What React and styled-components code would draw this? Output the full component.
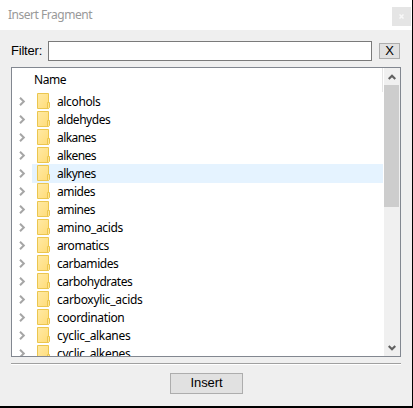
import React from "react";
import styled, { createGlobalStyle } from "styled-components";

const GlobalStyle = createGlobalStyle`
  * { box-sizing: border-box; }
  body { margin: 0; background: #000; overflow: hidden; }
  button, input { font: inherit; margin: 0; border-radius: 0; outline: none; }
`;

const Dialog = styled.main`
  display: flex;
  flex-direction: column;
  width: 412px;
  height: 406px;
  background: #efefef;
  color: #000;
  font: 12px/18px "Noto Sans", sans-serif;
`;

const TitleBar = styled.header`
  display: flex;
  justify-content: space-between;
  height: 30px;
  padding: 7px 1px 0 8px;
  background: #fff;
`;

const Title = styled.h1`
  margin: -1px 0 0;
  font-size: 12px;
  font-weight: 400;
  line-height: 18px;
  letter-spacing: -0.48px;
  color: #999;
`;

const CloseButton = styled.button`
  display: grid;
  place-items: center;
  width: 19px;
  height: 19px;
  padding: 0;
  border: 0;
  background: #e5e5e5;
`;

const FilterRow = styled.div`
  display: flex;
  align-items: center;
  height: 20px;
  margin: 11px 12px 6px 11px;
`;

const FilterLabel = styled.label`
  width: 37px;
  font-family: "Liberation Sans", sans-serif;
  font-size: 13px;
  letter-spacing: -0.2px;
  white-space: nowrap;
`;

const FilterInput = styled.input`
  width: 324px;
  height: 20px;
  padding: 0 4px;
  border: 1px solid #7a7a7a;
  background: #fff;
`;

const PushButton = styled.button`
  display: flex;
  align-items: center;
  justify-content: center;
  width: ${(p) => p.$width}px;
  height: ${(p) => p.$height}px;
  padding: 0 0 1px;
  border: 1px solid #adadad;
  background: #e1e1e1;
  color: #000;
  font-family: "Liberation Sans", sans-serif;
  font-size: 13px;
  letter-spacing: -0.1px;
`;

const ClearButton = styled(PushButton)`
  margin-left: 7px;
`;

const TreeFrame = styled.section`
  display: flex;
  width: 390px;
  height: 290px;
  margin-left: 11px;
  border: 1px solid #828790;
  background: #fff;
`;

const Tree = styled.div`
  width: 371px;
  height: 288px;
  overflow: hidden;
`;

const ColumnHeader = styled.div`
  height: 24px;
  padding: 3px 0 0 22px;
  border-right: 1px solid #e5e5e5;
  letter-spacing: -0.4px;
`;

const TreeRow = styled.div`
  display: grid;
  grid-template-columns: 20px 1fr;
  height: 18px;
`;

const ExpandCell = styled.span`
  padding: 5px 0 0 7px;
  line-height: 0;
`;

const ItemCell = styled.span`
  display: flex;
  padding: 1px 0 0 5px;
  background: ${(p) => (p.$hovered ? "#e5f3ff" : "transparent")};
`;

const ItemName = styled.span`
  margin-left: 7px;
  letter-spacing: ${(p) => p.$tracking}px;
  white-space: nowrap;
`;

const ScrollBar = styled.div`
  display: flex;
  flex-direction: column;
  width: 16px;
  height: 288px;
  margin-left: 1px;
  background: #f0f0f0;
`;

const ScrollArrow = styled.div`
  display: grid;
  place-items: center;
  height: 17px;
  padding-top: 1px;
`;

const ScrollTrack = styled.div`
  flex: 1;
`;

const ScrollThumb = styled.div`
  width: 15px;
  height: 122px;
  background: #cdcdcd;
`;

const Separator = styled.hr`
  width: 390px;
  height: 2px;
  margin: 6px 0 0 11px;
  border: 0;
  border-top: 1px solid #a0a0a0;
  background: #fff;
`;

const Actions = styled.footer`
  display: flex;
  padding: 8px 0 0 170px;
`;

const Chevron = () => (
  <svg width="7" height="9" viewBox="0 0 7 9" fill="none" stroke="#a6a6a6" strokeWidth="2">
    <path d="M1 .8 4.8 4.5 1 8.2" />
  </svg>
);

const Folder = () => (
  <svg width="13" height="16" viewBox="0 0 13 16">
    <defs>
      <linearGradient id="folderFill" x2="1" y2="1">
        <stop stopColor="#ffeaa5" />
        <stop offset="1" stopColor="#ffdc78" />
      </linearGradient>
    </defs>
    <path d="M.5.5h11v15H.5z" fill="url(#folderFill)" stroke="#ebc64f" />
    <path d="M10.5 15.5v-6h2v5l-1 1z" fill="#ffe493" stroke="#ebc64f" />
  </svg>
);

const Arrow = ({ down }) => (
  <svg width="8" height="8" viewBox="0 0 8 8" fill="none" stroke="#606060" strokeWidth="2.2">
    <path d={down ? "M.7 2 4 5.3 7.3 2" : "M.7 6 4 2.7 7.3 6"} />
  </svg>
);

const fragments = [
  { name: "alcohols", tracking: -0.36 },
  { name: "aldehydes", tracking: -0.46 },
  { name: "alkanes", tracking: -0.56 },
  { name: "alkenes", tracking: -0.56 },
  { name: "alkynes", tracking: -0.5 },
  { name: "amides", tracking: -0.5 },
  { name: "amines", tracking: -0.5 },
  { name: "amino_acids", tracking: -0.36 },
  { name: "aromatics", tracking: -0.42 },
  { name: "carbamides", tracking: -0.44 },
  { name: "carbohydrates", tracking: -0.46 },
  { name: "carboxylic_acids", tracking: -0.3 },
  { name: "coordination", tracking: -0.36 },
  { name: "cyclic_alkanes", tracking: -0.32 },
  { name: "cyclic_alkenes", tracking: -0.32 },
];

export default function App() {
  return (
    <>
      <GlobalStyle />
      <Dialog>
        <TitleBar>
          <Title>Insert Fragment</Title>
          <CloseButton aria-label="Close">
            <svg width="5" height="5" viewBox="0 0 5 5" stroke="#f8f8f8" strokeWidth="1.5">
              <path d="m.5.5 4 4m0-4-4 4" />
            </svg>
          </CloseButton>
        </TitleBar>
        <FilterRow>
          <FilterLabel htmlFor="filter">Filter:</FilterLabel>
          <FilterInput id="filter" />
          <ClearButton $width={21} $height={16}>X</ClearButton>
        </FilterRow>
        <TreeFrame>
          <Tree>
            <ColumnHeader>Name</ColumnHeader>
            {fragments.map(({ name, tracking }) => (
              <TreeRow key={name}>
                <ExpandCell><Chevron /></ExpandCell>
                <ItemCell $hovered={name === "alkynes"}>
                  <Folder />
                  <ItemName $tracking={tracking}>{name}</ItemName>
                </ItemCell>
              </TreeRow>
            ))}
          </Tree>
          <ScrollBar>
            <ScrollArrow><Arrow /></ScrollArrow>
            <ScrollTrack><ScrollThumb /></ScrollTrack>
            <ScrollArrow><Arrow down /></ScrollArrow>
          </ScrollBar>
        </TreeFrame>
        <Separator />
        <Actions>
          <PushButton $width={73} $height={21}>Insert</PushButton>
        </Actions>
      </Dialog>
    </>
  );
}
